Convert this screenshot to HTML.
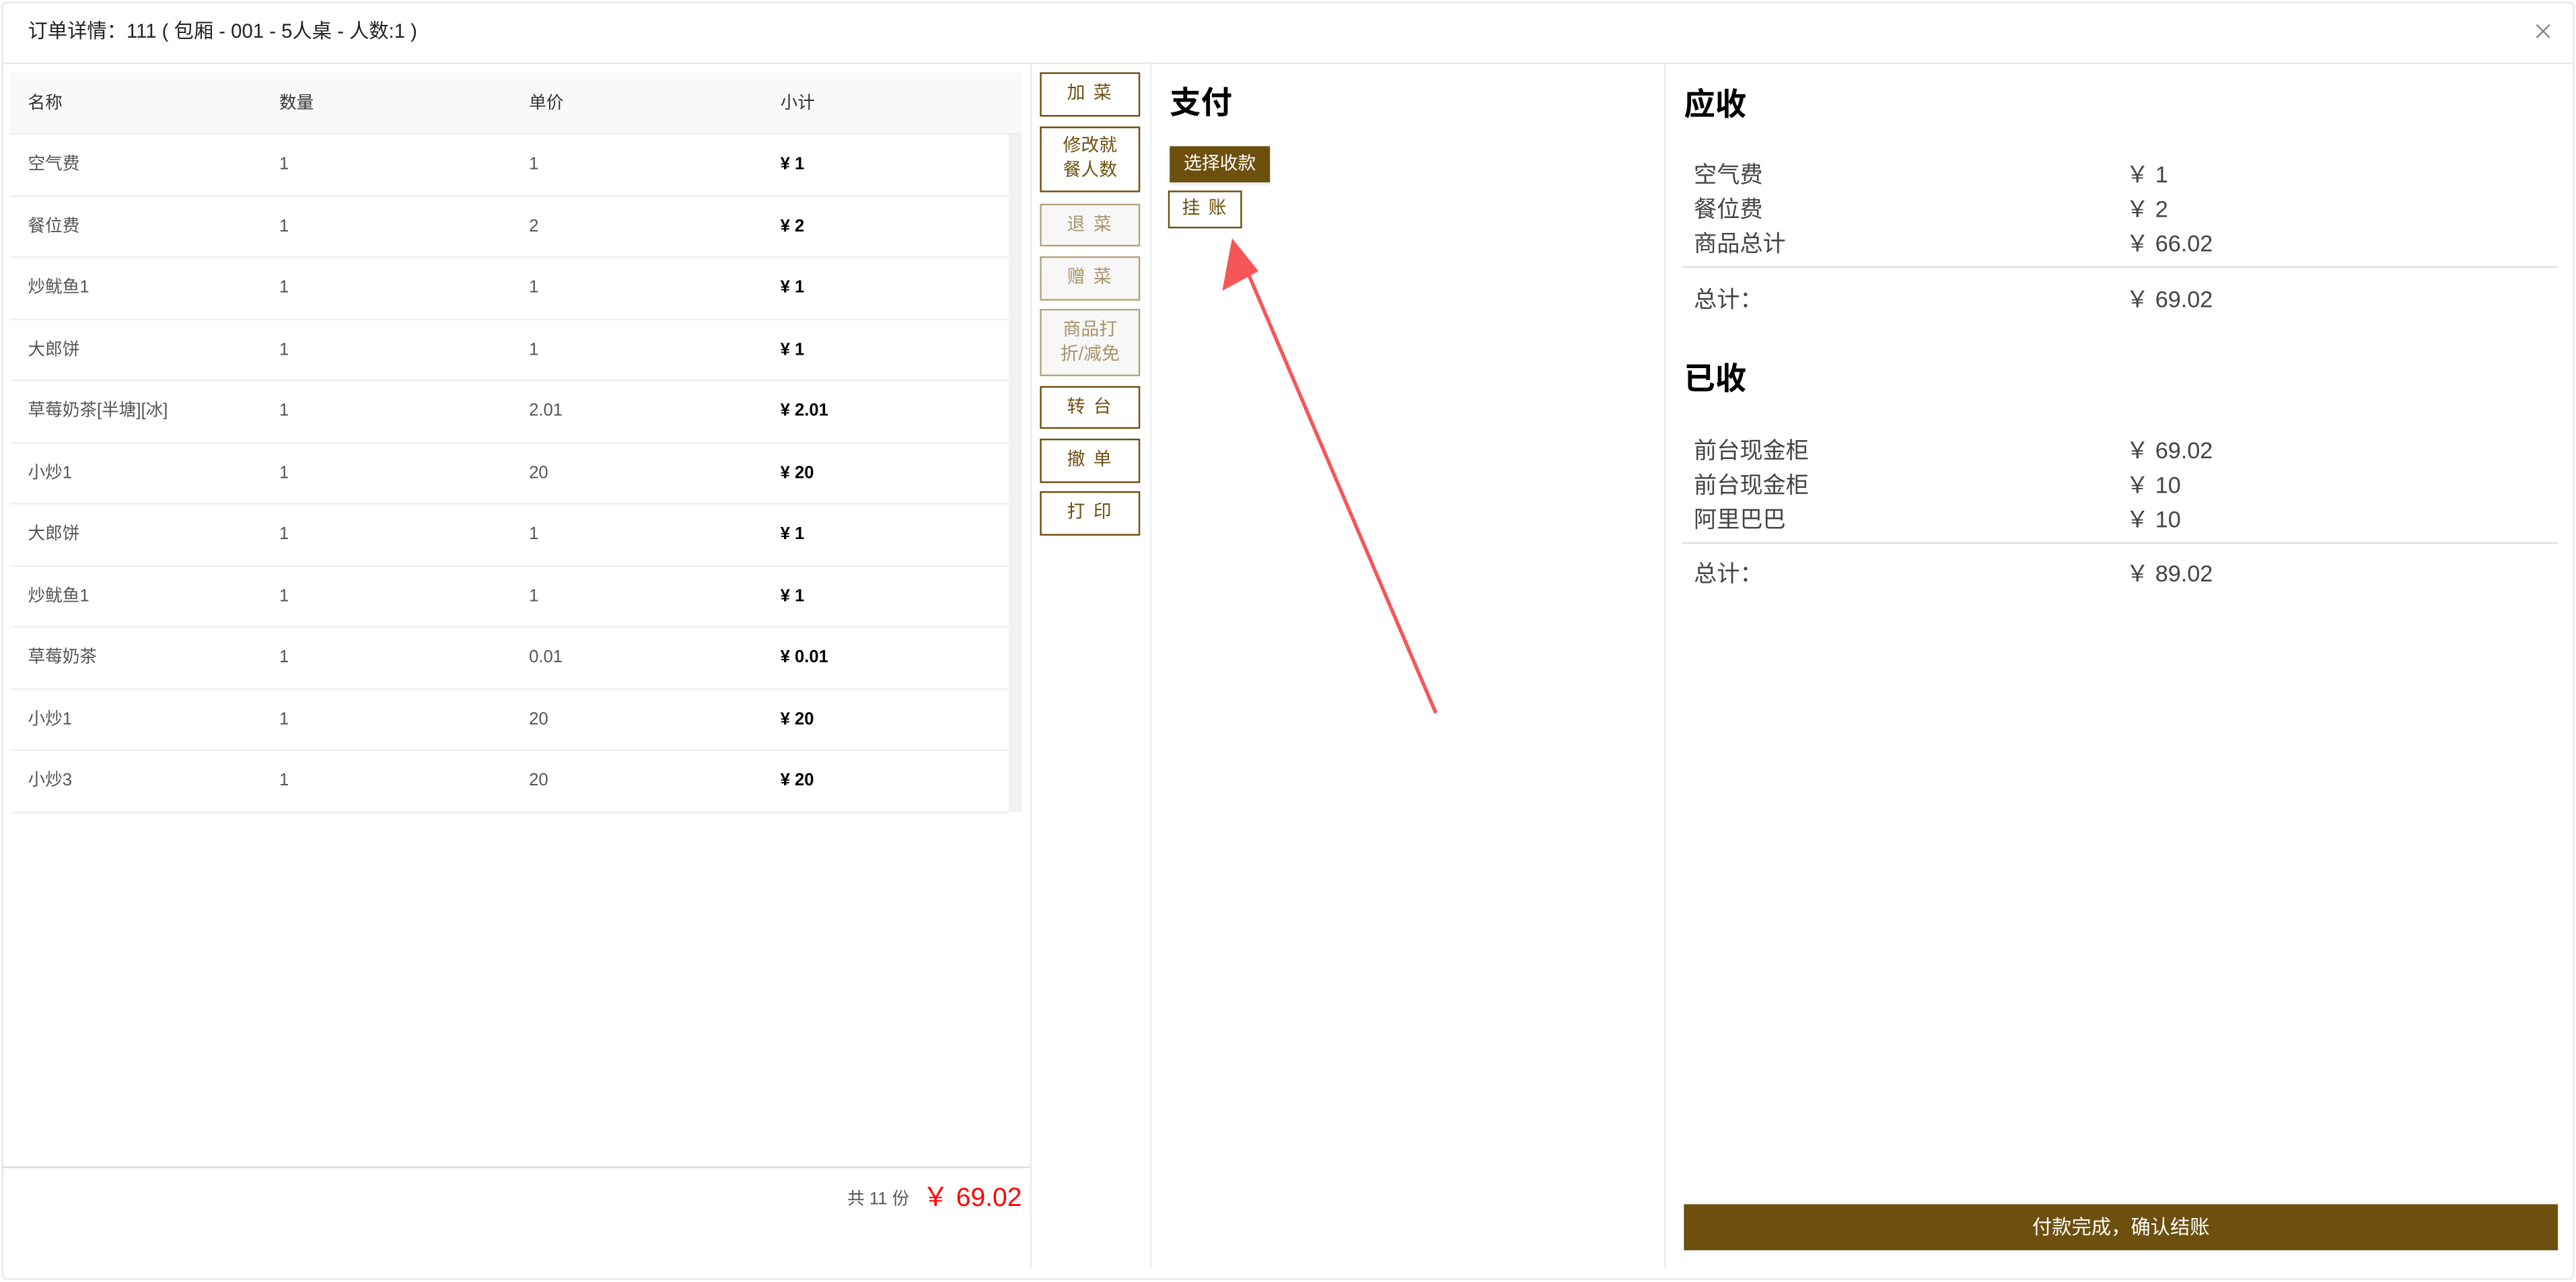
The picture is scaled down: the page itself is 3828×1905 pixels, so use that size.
<!DOCTYPE html>
<html><head><meta charset="utf-8"><style>
*{margin:0;padding:0;box-sizing:border-box}
html,body{width:3828px;height:1905px;overflow:hidden;background:#fff}
#s{position:absolute;left:0;top:0;width:1568px;height:780.3px;transform:scale(2.44133);transform-origin:0 0;font-family:"Liberation Sans","Noto Sans CJK SC",sans-serif;color:#333}
.a{position:absolute;white-space:nowrap}
.modal{position:absolute;left:1px;top:1px;width:1566px;height:778px;border:1px solid #e6e6e6;border-radius:3px;background:#fff}
.hl{position:absolute;height:1px;background:#e8e8e8}
.vl{position:absolute;width:1px;background:#e8e8e8}
.row{position:absolute;left:6px;width:608px;height:37.5px;border-bottom:1px solid #eee;font-size:10.5px;color:#555}
.row span{position:absolute;top:0;line-height:37px}
.btn{position:absolute;left:633px;width:61px;border:1px solid #6d4f0e;color:#6d4f0e;font-size:11px;text-align:center;display:flex;align-items:center;justify-content:center;line-height:15px;letter-spacing:1px}
.dis{border-color:#b5a47e;color:#a8946b;background:#f7f7f7}
.rl{position:absolute;left:1031px;font-size:14px;color:#444}
.rv{position:absolute;left:1294px;font-size:14px;color:#444}
</style></head><body><div id="s">
<div class="modal"></div>
<div class="a" style="left:17px;top:11px;font-size:12px;color:#222;line-height:16px">订单详情：111 ( 包厢 - 001 - 5人桌 - 人数:1 )</div>
<svg class="a" style="left:1543px;top:14px" width="10" height="10" viewBox="0 0 10 10"><path d="M1 1L9 9M9 1L1 9" stroke="#888" stroke-width="1"/></svg>
<div class="hl" style="left:1px;top:38px;width:1566px"></div>
<div class="vl" style="left:627px;top:38px;height:734px"></div>
<div class="vl" style="left:700px;top:38px;height:734px;background:#eee"></div>
<div class="vl" style="left:1013px;top:38px;height:734px"></div>
<div class="a" style="left:6px;top:44px;width:616px;height:38px;background:#f9f9f9;border-bottom:1px solid #eee;font-size:10.5px;color:#333">
<span class="a" style="left:11px;line-height:38px">名称</span><span class="a" style="left:164px;line-height:38px">数量</span><span class="a" style="left:316px;line-height:38px">单价</span><span class="a" style="left:469px;line-height:38px">小计</span></div>
<div class="a" style="left:614px;top:82px;width:8px;height:412px;background:#f1f1f1"></div>
<div class="row" style="top:82px"><span style="left:11px">空气费</span><span style="left:164px">1</span><span style="left:316px">1</span><span style="left:469px;font-weight:bold;color:#000">¥ 1</span></div>
<div class="row" style="top:119.5px"><span style="left:11px">餐位费</span><span style="left:164px">1</span><span style="left:316px">2</span><span style="left:469px;font-weight:bold;color:#000">¥ 2</span></div>
<div class="row" style="top:157px"><span style="left:11px">炒鱿鱼1</span><span style="left:164px">1</span><span style="left:316px">1</span><span style="left:469px;font-weight:bold;color:#000">¥ 1</span></div>
<div class="row" style="top:194.5px"><span style="left:11px">大郎饼</span><span style="left:164px">1</span><span style="left:316px">1</span><span style="left:469px;font-weight:bold;color:#000">¥ 1</span></div>
<div class="row" style="top:232px"><span style="left:11px">草莓奶茶[半塘][冰]</span><span style="left:164px">1</span><span style="left:316px">2.01</span><span style="left:469px;font-weight:bold;color:#000">¥ 2.01</span></div>
<div class="row" style="top:269.5px"><span style="left:11px">小炒1</span><span style="left:164px">1</span><span style="left:316px">20</span><span style="left:469px;font-weight:bold;color:#000">¥ 20</span></div>
<div class="row" style="top:307px"><span style="left:11px">大郎饼</span><span style="left:164px">1</span><span style="left:316px">1</span><span style="left:469px;font-weight:bold;color:#000">¥ 1</span></div>
<div class="row" style="top:344.5px"><span style="left:11px">炒鱿鱼1</span><span style="left:164px">1</span><span style="left:316px">1</span><span style="left:469px;font-weight:bold;color:#000">¥ 1</span></div>
<div class="row" style="top:382px"><span style="left:11px">草莓奶茶</span><span style="left:164px">1</span><span style="left:316px">0.01</span><span style="left:469px;font-weight:bold;color:#000">¥ 0.01</span></div>
<div class="row" style="top:419.5px"><span style="left:11px">小炒1</span><span style="left:164px">1</span><span style="left:316px">20</span><span style="left:469px;font-weight:bold;color:#000">¥ 20</span></div>
<div class="row" style="top:457px"><span style="left:11px">小炒3</span><span style="left:164px">1</span><span style="left:316px">20</span><span style="left:469px;font-weight:bold;color:#000">¥ 20</span></div>
<div class="hl" style="left:1px;top:710px;width:626px;background:#ddd"></div>
<div class="a" style="right:946px;top:719px;line-height:22px;text-align:right"><span style="font-size:10.5px;color:#555;vertical-align:middle">共 11 份</span><span style="font-size:16px;color:#f00;margin-left:8px;vertical-align:middle">￥ 69.02</span></div>
<div class="btn" style="top:44px;height:27px">加 菜</div>
<div class="btn" style="top:77px;height:40px;letter-spacing:0">修改就<br>餐人数</div>
<div class="btn dis" style="top:124px;height:26px">退 菜</div>
<div class="btn dis" style="top:156px;height:27px">赠 菜</div>
<div class="btn dis" style="top:188px;height:41px;letter-spacing:0">商品打<br>折/减免</div>
<div class="btn" style="top:235px;height:26px">转 台</div>
<div class="btn" style="top:267px;height:27px">撤 单</div>
<div class="btn" style="top:299px;height:27px">打 印</div>
<div class="a" style="left:712px;top:52px;font-size:19px;font-weight:bold;color:#000;line-height:24px">支付</div>
<div class="a" style="left:712px;top:89px;width:61px;height:22px;background:#6d4f0e;color:#fff;font-size:11px;text-align:center;line-height:22px;box-shadow:0 1px 2px #ddd">选择收款</div>
<div class="a" style="left:711px;top:116px;width:45px;height:23px;border:1px solid #6d4f0e;color:#6d4f0e;font-size:11px;text-align:center;line-height:21px;letter-spacing:1px">挂 账</div>
<svg class="a" style="left:0;top:0" width="1568" height="780"><line x1="874" y1="434" x2="757" y2="160" stroke="#f55658" stroke-width="2.2"/><polygon points="750,145 744,177 766,165" fill="#f55658"/></svg>
<div class="a" style="left:1025px;top:53px;font-size:19px;font-weight:bold;color:#000;line-height:24px">应收</div>
<div class="rl" style="top:96px">空气费</div><div class="rv" style="top:96px">￥ 1</div>
<div class="rl" style="top:117px">餐位费</div><div class="rv" style="top:117px">￥ 2</div>
<div class="rl" style="top:138px">商品总计</div><div class="rv" style="top:138px">￥ 66.02</div>
<div class="hl" style="left:1024px;top:162px;width:533px;background:#ddd"></div>
<div class="rl" style="top:172px">总计：</div><div class="rv" style="top:172px">￥ 69.02</div>
<div class="a" style="left:1025px;top:220px;font-size:19px;font-weight:bold;color:#000;line-height:24px">已收</div>
<div class="rl" style="top:264px">前台现金柜</div><div class="rv" style="top:264px">￥ 69.02</div>
<div class="rl" style="top:285px">前台现金柜</div><div class="rv" style="top:285px">￥ 10</div>
<div class="rl" style="top:306px">阿里巴巴</div><div class="rv" style="top:306px">￥ 10</div>
<div class="hl" style="left:1024px;top:330px;width:533px;background:#ddd"></div>
<div class="rl" style="top:339px">总计：</div><div class="rv" style="top:339px">￥ 89.02</div>
<div class="a" style="left:1025px;top:733px;width:532px;height:28px;background:#6d4f0e;color:#fff;font-size:12px;text-align:center;line-height:28px">付款完成，确认结账</div>
</div></body></html>
